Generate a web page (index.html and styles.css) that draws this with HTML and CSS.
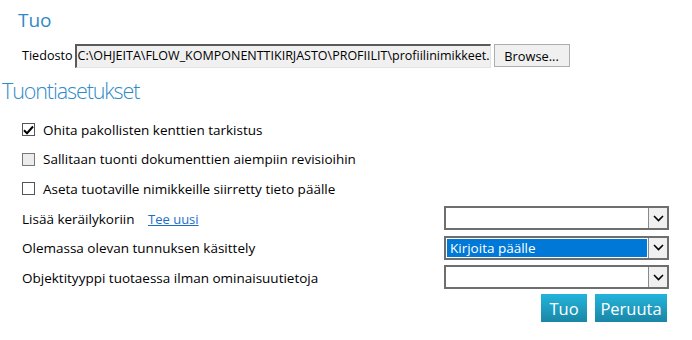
FILE: index.html
```html
<!DOCTYPE html>
<html>
<head>
<meta charset="utf-8">
<link rel="stylesheet" href="styles.css">
</head>
<body>
<div class="page">
  <h2 class="h-tuo">Tuo</h2>
  <div class="file-row">
    <span class="file-label">Tiedosto</span>
    <div class="file-path">C:\OHJEITA\FLOW_KOMPONENTTIKIRJASTO\PROFIILIT\profiilinimikkeet.</div>
    <button class="browse">Browse...</button>
  </div>
  <h2 class="h-settings">Tuontiasetukset</h2>
  <div class="options">
    <label class="check-row"><span class="box checked"><svg width="11" height="10" viewBox="0 0 11 10"><path d="M1 5.2 L4 8.2 L10 1.5" fill="none" stroke="#000" stroke-width="2"/></svg></span>Ohita pakollisten kenttien tarkistus</label>
    <label class="check-row"><span class="box disabled"></span>Sallitaan tuonti dokumenttien aiempiin revisioihin</label>
    <label class="check-row"><span class="box"></span>Aseta tuotaville nimikkeille siirretty tieto päälle</label>
    <div class="field-row">
      <span class="field-label">Lisää keräilykoriin <a class="link" href="#">Tee uusi</a></span>
      <div class="select"><span class="sel-value"></span><span class="sel-arrow"><svg width="11" height="7" viewBox="0 0 11 7"><path d="M1 1 L5.5 5.5 L10 1" fill="none" stroke="#000" stroke-width="1.6"/></svg></span></div>
    </div>
    <div class="field-row">
      <span class="field-label">Olemassa olevan tunnuksen käsittely</span>
      <div class="select"><span class="sel-value selected">Kirjoita päälle</span><span class="sel-arrow"><svg width="11" height="7" viewBox="0 0 11 7"><path d="M1 1 L5.5 5.5 L10 1" fill="none" stroke="#000" stroke-width="1.6"/></svg></span></div>
    </div>
    <div class="field-row">
      <span class="field-label">Objektityyppi tuotaessa ilman ominaisuutietoja</span>
      <div class="select"><span class="sel-value"></span><span class="sel-arrow"><svg width="11" height="7" viewBox="0 0 11 7"><path d="M1 1 L5.5 5.5 L10 1" fill="none" stroke="#000" stroke-width="1.6"/></svg></span></div>
    </div>
    <div class="actions">
      <button class="btn">Tuo</button>
      <button class="btn">Peruuta</button>
    </div>
  </div>
</div>
</body>
</html>
```

FILE: styles.css
```css
* { box-sizing: border-box; }
html, body { margin: 0; padding: 0; background: #fff; }
body { font-family: "Open Sans", "Noto Sans", sans-serif; color: #000; }
.page { width: 692px; height: 340px; overflow: hidden; }
h2 { margin: 0; font-weight: 400; color: #2f8ac8; }
.h-tuo { font-size: 19px; line-height: 24px; padding: 8px 0 0 18px; }
.file-row { display: flex; align-items: center; padding: 11px 0 0 22px; height: 36px; }
.file-label { font-size: 12.6px; margin-right: 2px; }
.file-path {
  width: 416px; height: 24px; background: #f0f0f0;
  border-top: 2px solid #5a5a5a; border-left: 2px solid #5a5a5a;
  border-right: 1px solid #e3e3e3; border-bottom: 1px solid #e3e3e3;
  font-size: 12.5px; line-height: 20px; white-space: nowrap; overflow: hidden; padding-left: 1px;
}
.browse {
  margin-left: 3px; width: 76px; height: 23px; font-family: inherit; font-size: 12.8px;
  background: #f0f0f0; border: 1px solid #adadad; padding: 0;
}
.h-settings {
  font-size: 21.5px; line-height: 30px; padding: 8px 0 0 2px; font-weight: 300;
  letter-spacing: -1.1px;
}
.options { padding: 9px 0 0 22px; width: 669px; display: flex; flex-direction: column; }
.check-row { display: flex; align-items: center; height: 29.5px; font-size: 13.5px; }
.box {
  width: 13px; height: 13px; border: 1px solid #555; background: #fff; margin-right: 8px;
  display: flex; align-items: center; justify-content: center;
}
.box.disabled { background: #ececec; border-color: #777; }
.field-row { display: flex; align-items: center; justify-content: space-between; height: 29.6px; font-size: 13.5px; }
.field-label { padding-top: 1px; }
.link { color: #1a6fc9; margin-left: 10px; font-size: 13px; }
.select {
  width: 225px; height: 24px; border: 2px solid #6e6e6e; display: flex; background: #fff;
}
.sel-value { flex: 1; font-size: 13.5px; color: #fff; line-height: 18px; padding-left: 3px; }
.sel-value.selected { background: #0078d7; border: 1px solid #fff; }
.sel-arrow {
  width: 19px; background: #f0f0f0; border-left: 1px solid #8a8a8a;
  display: flex; align-items: center; justify-content: center;
}
.actions { display: flex; justify-content: flex-end; gap: 8px; padding-top: 2px; padding-right: 2px; }
.btn {
  height: 28px; border: none; color: #fff; font-family: "Open Sans", sans-serif; font-size: 16.5px;
  font-stretch: 88%;
  background: linear-gradient(#24b4db, #1a86a6); padding: 0;
}
.btn:first-child { width: 46px; }
.btn:last-child { width: 72px; }
```
